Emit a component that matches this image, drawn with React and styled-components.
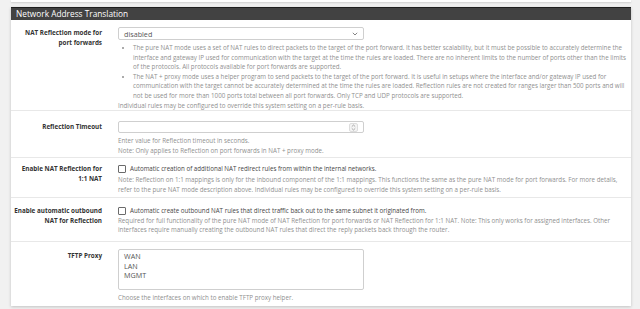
import React from "react";
import styled, { createGlobalStyle } from "styled-components";

const GlobalStyle = createGlobalStyle`
  html, body {
    margin: 0;
    padding: 0;
    background: #f1f1f1;
    font-family: "Open Sans", "Liberation Sans", sans-serif;
  }
`;

const Page = styled.div`
  width: 640px;
  height: 309px;
  overflow: hidden;
  padding: 0 9px 0 11px;
  box-sizing: border-box;
`;

const PrevPanel = styled.div`
  height: 2px;
  background: #fff;
  box-shadow: 0 1px 2px rgba(0, 0, 0, 0.15);
  margin-bottom: 5px;
`;

const Panel = styled.div`
  background: #fff;
  box-shadow: 0 1px 3px rgba(0, 0, 0, 0.2);
`;

const Heading = styled.div`
  height: 13px;
  background: #424242;
  border-top: 1px solid #1f1f1f;
  box-sizing: border-box;
  color: #fff;
  font-size: 8.3px;
  line-height: 12px;
  padding-left: 5px;
`;

const Row = styled.div`
  display: grid;
  grid-template-columns: 107px 1fr;
  padding: ${(p) => p.$pad};
  border-top: ${(p) => (p.$first ? "none" : "1px solid #e8e8e8")};
`;

const Label = styled.div`
  text-align: right;
  padding-right: 16px;
  padding-top: ${(p) => p.$top}px;
  font-size: 6.3px;
  font-weight: 700;
  line-height: 9.6px;
  color: #333;
`;

const Field = styled.div`
  padding-right: 5px;
`;

const Box = styled.div`
  width: 246px;
  height: ${(p) => p.$h}px;
  box-sizing: border-box;
  border: 1px solid #cfcfcf;
  border-radius: 2px;
  display: flex;
  align-items: center;
  justify-content: space-between;
  padding: 0 5px;
  font-size: 7.2px;
  color: #555;
`;

const ListBox = styled.div`
  width: 246px;
  height: 41px;
  box-sizing: border-box;
  border: 1px solid #cfcfcf;
  border-radius: 2px;
  padding: 2px 5px;
  font-size: 7.2px;
  line-height: 9.6px;
  color: #555;
`;

const Help = styled.div`
  margin-top: ${(p) => p.$mt || 0}px;
  font-size: 6.22px;
  line-height: 9.6px;
  color: #8f8f8f;
`;

const Bullets = styled.ul`
  margin: 0;
  padding-left: 15px;
  list-style: disc;
`;

const CheckRow = styled.label`
  display: flex;
  align-items: center;
  gap: 4px;
  font-size: 6.2px;
  line-height: 9.6px;
  color: #454545;
`;

const Check = styled.span`
  width: 8px;
  height: 8px;
  box-sizing: border-box;
  border: 1px solid #6b6b6b;
  border-radius: 1px;
  background: #fff;
  flex: none;
`;

const Chevron = () => (
  <svg width="6" height="4" viewBox="0 0 6 4">
    <path d="M0.8 0.8 L3 3 L5.2 0.8" fill="none" stroke="#777" strokeWidth="0.9" />
  </svg>
);

const Spinner = () => (
  <svg width="9" height="9" viewBox="0 0 9 9">
    <rect x="0.5" y="0.5" width="8" height="8" rx="1.5" fill="#f4f4f4" stroke="#d6d6d6" strokeWidth="0.8" />
    <path d="M2.8 3.6 L4.5 2 L6.2 3.6" fill="none" stroke="#888" strokeWidth="0.7" />
    <path d="M2.8 5.4 L4.5 7 L6.2 5.4" fill="none" stroke="#888" strokeWidth="0.7" />
  </svg>
);

export default function App() {
  return (
    <Page>
      <GlobalStyle />
      <PrevPanel />
      <Panel>
        <Heading>Network Address Translation</Heading>

        <Row $first $pad="7px 0 0">
          <Label $top={1}>
            NAT Reflection mode for
            <br />
            port forwards
          </Label>
          <Field>
            <Box $h={13}>
              <span>disabled</span>
              <Chevron />
            </Box>
            <Help $mt={3}>
              <Bullets>
                <li>
                  The pure NAT mode uses a set of NAT rules to direct packets to the target of the port forward. It has better scalability, but it must be possible to accurately determine the interface and gateway IP used for communication with the target at the time the rules are loaded. There are no inherent limits to the number of ports other than the limits of the protocols. All protocols available for port forwards are supported.
                </li>
                <li>
                  The NAT + proxy mode uses a helper program to send packets to the target of the port forward. It is useful in setups where the interface and/or gateway IP used for communication with the target cannot be accurately determined at the time the rules are loaded. Reflection rules are not created for ranges larger than 500 ports and will not be used for more than 1000 ports total between all port forwards. Only TCP and UDP protocols are supported.
                </li>
              </Bullets>
              Individual rules may be configured to override this system setting on a per-rule basis.
            </Help>
          </Field>
        </Row>

        <Row $pad="10px 0 2px">
          <Label $top={1}>Reflection Timeout</Label>
          <Field>
            <Box $h={12}>
              <span />
              <Spinner />
            </Box>
            <Help $mt={3}>
              Enter value for Reflection timeout in seconds.
              <br />
              Note: Only applies to Reflection on port forwards in NAT + proxy mode.
            </Help>
          </Field>
        </Row>

        <Row $pad="6px 0 3px">
          <Label $top={0}>
            Enable NAT Reflection for
            <br />
            1:1 NAT
          </Label>
          <Field>
            <CheckRow>
              <Check />
              Automatic creation of additional NAT redirect rules from within the internal networks.
            </CheckRow>
            <Help $mt={1}>
              Note: Reflection on 1:1 mappings is only for the inbound component of the 1:1 mappings. This functions the same as the pure NAT mode for port forwards. For more details, refer to the pure NAT mode description above. Individual rules may be configured to override this system setting on a per-rule basis.
            </Help>
          </Field>
        </Row>

        <Row $pad="8px 0 6px">
          <Label $top={0}>
            Enable automatic outbound
            <br />
            NAT for Reflection
          </Label>
          <Field>
            <CheckRow>
              <Check />
              Automatic create outbound NAT rules that direct traffic back out to the same subnet it originated from.
            </CheckRow>
            <Help>
              Required for full functionality of the pure NAT mode of NAT Reflection for port forwards or NAT Reflection for 1:1 NAT. Note: This only works for assigned interfaces. Other interfaces require manually creating the outbound NAT rules that direct the reply packets back through the router.
            </Help>
          </Field>
        </Row>

        <Row $pad="7px 0 3px">
          <Label $top={2}>TFTP Proxy</Label>
          <Field>
            <ListBox>
              WAN
              <br />
              LAN
              <br />
              MGMT
            </ListBox>
            <Help $mt={3}>Choose the interfaces on which to enable TFTP proxy helper.</Help>
          </Field>
        </Row>
      </Panel>
    </Page>
  );
}
